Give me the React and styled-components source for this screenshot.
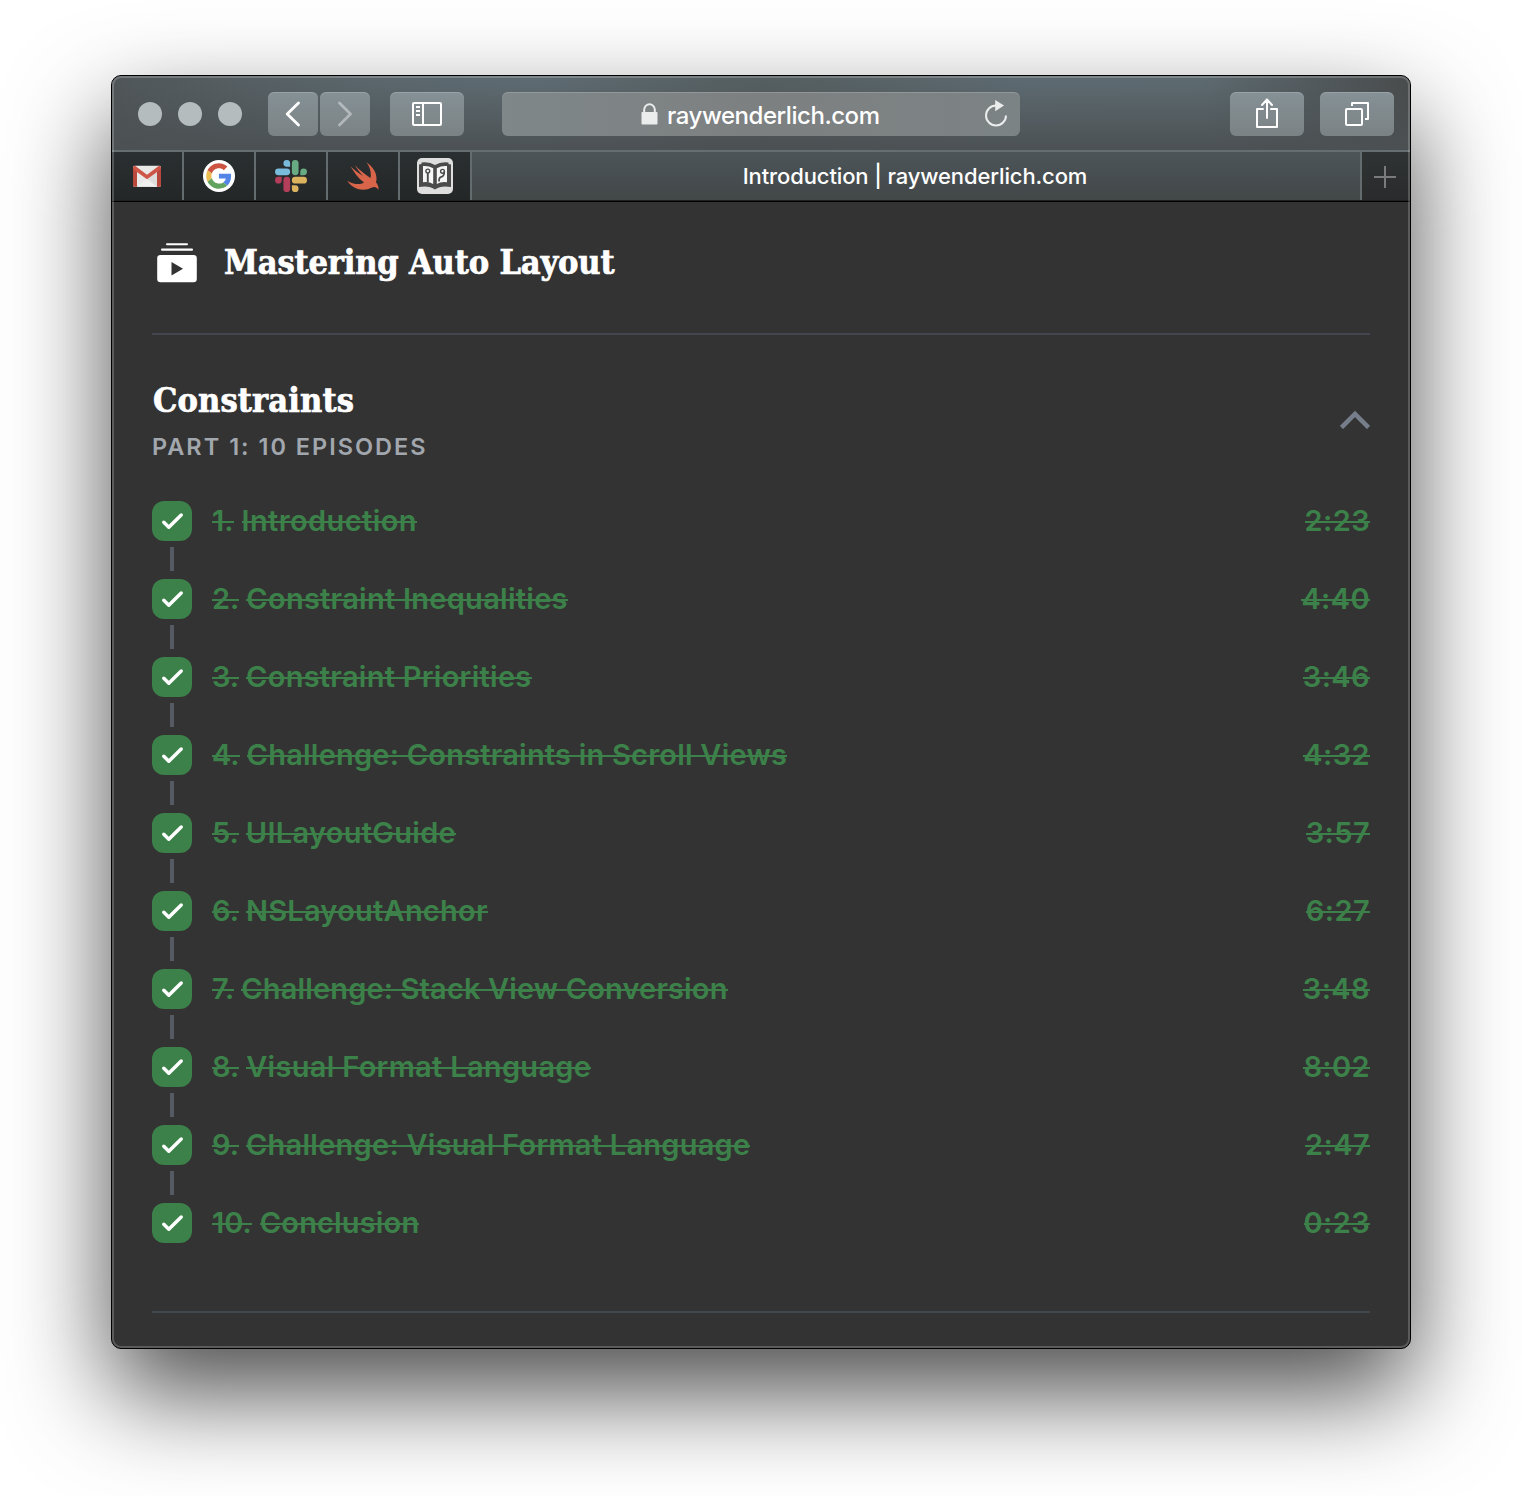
import React from "react";
import styled, { createGlobalStyle } from "styled-components";

const GlobalStyle = createGlobalStyle`
  *, *::before, *::after { box-sizing: border-box; }
  body { margin: 0; background: #fff; }
  svg { display: block; flex: none; }
`;

const sans = `Inter, Roboto, "Liberation Sans", sans-serif`;

const Page = styled.div`
  width: 1522px;
  height: 1496px;
  padding: 75px 111px 147px;
  overflow: hidden;
  font-family: ${sans};
`;

const Window = styled.main`
  position: relative;
  display: flex;
  flex-direction: column;
  height: 100%;
  border: 1px solid #000;
  border-radius: 10px;
  background: #333;
  box-shadow: 0 44px 100px rgba(0, 0, 0, 0.7);

  &::after {
    content: "";
    position: absolute;
    inset: 0;
    border: 2px solid rgba(255, 255, 255, 0.2);
    border-radius: 9px;
    pointer-events: none;
  }
`;

const Toolbar = styled.header`
  display: flex;
  align-items: flex-start;
  height: 76px;
  padding: 16px 16px 0 26px;
  border-bottom: 2px solid #666e71;
  border-radius: 9px 9px 0 0;
  background:
    linear-gradient(180deg, rgba(75, 80, 82, 0) 10%, rgba(75, 80, 82, 0.95) 100%),
    linear-gradient(90deg, #505658 0, #5a666c 20%, #5d6a71 33%, #545d5f 50%, #5c6970 70%, #5c696f 84%, #494c4d 100%);
`;

const Lights = styled.div`
  display: flex;
  align-items: center;
  gap: 16px;
  height: 44px;
  margin-right: 26px;
`;

const Light = styled.span`
  width: 24px;
  height: 24px;
  border-radius: 50%;
  background: #b5bcbe;
`;

const ToolButton = styled.button`
  display: flex;
  align-items: center;
  justify-content: center;
  width: ${(p) => p.$width}px;
  height: 44px;
  margin: 0 ${(p) => p.$after || 0}px 0 0;
  padding: 0;
  border: 0;
  border-radius: 6px;
  background: linear-gradient(180deg, #859196, #7b8284);
  box-shadow: inset 0 1px 0 rgba(255, 255, 255, 0.17);
`;

const AddressBar = styled.div`
  display: flex;
  align-items: center;
  width: 518px;
  height: 44px;
  margin-right: auto;
  padding: 0 12px 0 139px;
  border-radius: 6px;
  background: linear-gradient(90deg, #7f8789, #7d8081 50%, #7c8385);
  box-shadow: inset 0 1px 0 rgba(255, 255, 255, 0.17);
  color: #fff;
`;

const Address = styled.span`
  flex: 1;
  margin-left: 9px;
  padding-top: 4px;
  font-size: 24px;
  font-weight: 500;
  line-height: 30px;
  letter-spacing: -0.45px;
  white-space: nowrap;
`;

const TabBar = styled.nav`
  display: flex;
  height: 50px;
  border-bottom: 1px solid #000;
  background: #1e2021;
  padding-bottom: 1px;
`;

const PinnedTab = styled.div`
  display: flex;
  align-items: center;
  justify-content: center;
  width: 72px;
  border-right: 2px solid #656c6f;
  background: linear-gradient(180deg, #2a2f31, #242728);
`;

const ActiveTab = styled.div`
  flex: 1;
  padding-right: 2px;
  border-right: 2px solid #656c6f;
  background: linear-gradient(180deg, #4d5559, #424748);
  color: #fff;
  font-size: 22px;
  font-weight: 500;
  line-height: 48px;
  text-align: center;
  white-space: nowrap;
  letter-spacing: -0.12px;
`;

const NewTab = styled.div`
  display: flex;
  align-items: center;
  width: 48px;
  padding: 2px 0 0 12px;
  background: linear-gradient(180deg, #303334, #292b2c);
`;

const Content = styled.section`
  flex: 1;
  padding: 0 40px;
`;

const CourseHeader = styled.div`
  display: flex;
  height: 133px;
  padding: 41px 0 0 5px;
  border-bottom: 2px solid #42474f;
`;

const Heading = styled.h2`
  margin: ${(p) => p.$margin || "0"};
  color: #fff;
  font-family: "DejaVu Serif Condensed", "DejaVu Serif", serif;
  font-stretch: condensed;
  font-size: 34px;
  font-weight: 700;
  line-height: 38px;
  letter-spacing: ${(p) => p.$spacing}px;
  white-space: nowrap;
  -webkit-text-stroke: 0.7px #fff;
`;

const Part = styled.div`
  height: 978px;
  border-bottom: 2px solid #42474f;
`;

const PartHeader = styled.div`
  display: flex;
  justify-content: space-between;
  height: 166px;
  padding-top: 46px;
`;

const Episodes = styled.p`
  margin: 13px 0 0 0;
  color: #a2a7ae;
  font-size: 23.5px;
  font-weight: 600;
  line-height: 30px;
  letter-spacing: 2px;
`;

const Collapse = styled.div`
  padding-top: 28px;
`;

const List = styled.ol`
  margin: 0;
  padding: 0;
  list-style: none;
`;

const Row = styled.li`
  display: flex;
  height: 78px;
  color: #3c8149;
  font-size: 29px;
  font-weight: 600;
  line-height: 40px;
  white-space: nowrap;
`;

const Track = styled.div`
  display: flex;
  flex-direction: column;
  align-items: center;
  gap: 6px;
  width: 40px;
  margin-right: 20px;
`;

const Badge = styled.span`
  width: 40px;
  height: 40px;
  border-radius: 12px;
  background: #3c8149;
`;

const Connector = styled.span`
  width: 4px;
  height: 24px;
  background: #565b63;
`;

const Struck = styled.span`
  height: 40px;
  margin-left: ${(p) => p.$before || 0}px;
  letter-spacing: ${(p) => p.$spacing || 0}px;
  background: linear-gradient(#3c8149, #3c8149) 0 20px / 100% 2px no-repeat;
`;

const Duration = styled(Struck)`
  margin-left: auto;
`;

const episodes = [
  { title: "Introduction", time: "2:23", spacing: 0.4, gap: 8 },
  { title: "Constraint Inequalities", time: "4:40", spacing: 0.27 },
  { title: "Constraint Priorities", time: "3:46", spacing: 0.27 },
  { title: "Challenge: Constraints in Scroll Views", time: "4:32", spacing: 0.22 },
  { title: "UILayoutGuide", time: "3:57", spacing: 0.29 },
  { title: "NSLayoutAnchor", time: "6:27", spacing: 0.25 },
  { title: "Challenge: Stack View Conversion", time: "3:48", spacing: 0.14 },
  { title: "Visual Format Language", time: "8:02", spacing: 0.3 },
  { title: "Challenge: Visual Format Language", time: "2:47", spacing: 0.25 },
  { title: "Conclusion", time: "0:23", spacing: 0.15, gap: 8 },
];

const Chevron = ({ forward }) => (
  <svg width="20" height="28" viewBox="0 0 20 28" fill="none" stroke="#fff" strokeWidth="2.8"
    strokeLinecap="round" strokeLinejoin="round" opacity={forward ? 0.4 : 1}>
    <path d={forward ? "M4.500 3 15.500 14 4.500 25" : "M15.500 3 4.200 14 15.500 25"} />
  </svg>
);

const SidebarIcon = () => (
  <svg width="30" height="24" viewBox="0 0 30 24" fill="none" stroke="#fff" strokeWidth="2">
    <rect x="1" y="1" width="28" height="22" rx="1" />
    <path d="M11 1v22M4 5h4M4 9h4M4 13h4" />
  </svg>
);

const LockIcon = () => (
  <svg width="17" height="22" viewBox="0 0 17 22">
    <path d="M3.2 10V6.6a5.3 5.3 0 0 1 10.6 0V10" fill="none" stroke="#ebecec" strokeWidth="2" />
    <rect x="0.5" y="9" width="16" height="12.5" rx="0.8" fill="#ebecec" />
  </svg>
);

const ReloadIcon = () => (
  <svg width="24" height="28" viewBox="0 0 24 28">
    <path d="M22 15.500a10 10 0 1 1-10-10" fill="none" stroke="#ebecec" strokeWidth="2" />
    <path d="M11.200 0 20 5.500l-8.800 5.800z" fill="#ebecec" />
  </svg>
);

const ShareIcon = () => (
  <svg width="24" height="32" viewBox="0 0 24 32" fill="none" stroke="#fff" strokeWidth="2"
    strokeLinecap="round" strokeLinejoin="round">
    <path d="M8 11H2v18h20V11h-6M12 20V1.500M7 7l5-5.500L17 7" />
  </svg>
);

const TabsIcon = () => (
  <svg width="24" height="24" viewBox="0 0 24 24" fill="none" stroke="#fff" strokeWidth="2"
    strokeLinejoin="round">
    <rect x="1" y="7" width="16" height="16" rx="1" />
    <path d="M7 4V1h16v16h-3" />
  </svg>
);

const GmailIcon = () => (
  <svg width="28" height="22" viewBox="0 0 28 22">
    <g transform="translate(0 .8)">
      <rect width="28" height="21" rx="1.5" fill="#e9e9e7" />
      <path d="M14 13.500 24 5v16H20z" fill="#dddddb" />
      <path d="M4 21 14 13l10 8z" fill="#f1f1ef" />
      <path d="M0 1.500V19.500Q0 21 1.500 21H4V5.500zM28 1.500V19.500Q28 21 26.500 21H24V5.500z" fill="#b8483c" />
      <path d="M0 2Q0 0 2 0L14 9 26 0q2 0 2 2 0 1.500-1.500 2.500L14 13.500 1.500 4.500Q0 3.500 0 2z" fill="#cf5546" />
    </g>
  </svg>
);

const GoogleIcon = () => (
  <svg width="32" height="32" viewBox="0 0 32 32">
    <circle cx="16" cy="16" r="16" fill="#fff" />
    <g transform="translate(3.200 3.200) scale(.53)">
      <path fill="#cd5443" d="M24 9.500c3.540 0 6.710 1.220 9.210 3.600l6.850-6.850C35.900 2.380 30.470 0 24 0 14.620 0 6.510 5.380 2.560 13.220l7.980 6.190C12.430 13.720 17.740 9.500 24 9.500z" />
      <path fill="#5384e6" d="M46.980 24.550c0-1.570-.15-3.090-.38-4.550H24v9.020h12.940c-.58 2.960-2.260 5.480-4.780 7.180l7.730 6c4.510-4.180 7.090-10.360 7.090-17.650z" />
      <path fill="#edbd50" d="M10.530 28.590A14.500 14.500 0 0 1 9.770 24c0-1.600.27-3.140.76-4.590l-7.980-6.190A23.900 23.900 0 0 0 0 24c0 3.880.92 7.540 2.560 10.780z" />
      <path fill="#62a35f" d="M24 48c6.480 0 11.930-2.130 15.890-5.810l-7.730-6c-2.150 1.450-4.920 2.300-8.160 2.300-6.260 0-11.570-4.220-13.470-9.910l-7.980 6.190C6.510 42.620 14.620 48 24 48z" />
    </g>
  </svg>
);

const SlackIcon = () => (
  <svg width="32" height="32" viewBox="0 0 24 24">
    <path fill="#b23e5a" d="M5.042 15.165a2.528 2.528 0 0 1-2.520 2.523A2.528 2.528 0 0 1 0 15.165a2.527 2.527 0 0 1 2.522-2.520h2.520zM6.313 15.165a2.527 2.527 0 0 1 2.521-2.520 2.527 2.527 0 0 1 2.521 2.520v6.313A2.528 2.528 0 0 1 8.834 24a2.528 2.528 0 0 1-2.521-2.522z" />
    <path fill="#79bbdb" d="M8.834 5.042a2.528 2.528 0 0 1-2.521-2.520A2.528 2.528 0 0 1 8.834 0a2.528 2.528 0 0 1 2.521 2.522v2.520zM8.834 6.313a2.528 2.528 0 0 1 2.521 2.521 2.528 2.528 0 0 1-2.521 2.521H2.522A2.528 2.528 0 0 1 0 8.834a2.528 2.528 0 0 1 2.522-2.521z" />
    <path fill="#68ab83" d="M18.956 8.834a2.528 2.528 0 0 1 2.522-2.521A2.528 2.528 0 0 1 24 8.834a2.528 2.528 0 0 1-2.522 2.521h-2.522zM17.688 8.834a2.528 2.528 0 0 1-2.523 2.521 2.527 2.527 0 0 1-2.520-2.521V2.522A2.527 2.527 0 0 1 15.165 0a2.528 2.528 0 0 1 2.523 2.522z" />
    <path fill="#dbb25e" d="M15.165 18.956a2.528 2.528 0 0 1 2.523 2.522A2.528 2.528 0 0 1 15.165 24a2.527 2.527 0 0 1-2.520-2.522v-2.522zM15.165 17.688a2.527 2.527 0 0 1-2.520-2.523 2.526 2.526 0 0 1 2.520-2.520h6.313A2.527 2.527 0 0 1 24 15.165a2.528 2.528 0 0 1-2.522 2.523z" />
  </svg>
);

const SwiftIcon = () => (
  <svg width="32" height="28" viewBox="0 0 32 28">
    <path fill="#d8644a" d="M19.500.3C27 5.500 31 13 29 20.300c2.500 3.200 2.800 5.700 2.300 7.400-1.800-3.200-4.300-3.200-6.800-2C17 29.500 6 28 .3 18.700 6 22.500 13 23 17 20.500 11 16 7 10 3.300 4.200 8 8.500 12 11.500 16 14 13 11 10 6.500 7.700 3 13 8.500 19 13 23.500 16 24.500 11 23 5 19.500.3z" />
  </svg>
);

const BookIcon = () => (
  <svg width="36" height="36" viewBox="0 0 36 36">
    <rect width="36" height="36" rx="5" fill="#dedede" />
    <path fill="#4b4b4b" d="M2 6.500 4.500 6V4.500Q12.500 3.500 18 7q5.500-3.500 13.500-2.500V6l2.500.5V29q-10-2-16 2.500Q12 27 2 29z" />
    <path fill="#f6f6f6" d="M6 8q5.500-.5 10.200 2.300v15.700q-4.200-2.600-10.200-1.800zM30 8q-5.500-.5-10.200 2.300v15.700q4.200-2.600 10.200-1.800z" />
    <g fill="none" stroke="#4b4b4b" strokeWidth="1.400">
      <circle cx="10.800" cy="13" r="1.900" />
      <path d="M10.800 15v9.500" strokeWidth="1.900" />
      <circle cx="25.500" cy="13.300" r="1.900" />
      <path d="M27.300 13.800q0 4.700-3.600 5.400-1.700.4-1.700 4.300" strokeWidth="1.700" />
    </g>
  </svg>
);

const PlusIcon = () => (
  <svg width="22" height="22" viewBox="0 0 22 22" stroke="#797b7c" strokeWidth="2">
    <path d="M11 0v22M0 11h22" />
  </svg>
);

const CourseIcon = () => (
  <svg width="40" height="40" viewBox="0 0 40 40" fill="#fff">
    <rect x="9" y="0.300" width="22" height="2" rx="1" />
    <rect x="4" y="5.500" width="32" height="2.200" rx="1" />
    <path fillRule="evenodd" d="M3.500 12h33a3.300 3.300 0 0 1 3.300 3.300v20.700a3.300 3.300 0 0 1-3.300 3.300h-33a3.300 3.300 0 0 1-3.300-3.300V15.300A3.300 3.300 0 0 1 3.500 12zM14.500 19v13.500l11.500-6.700z" />
  </svg>
);

const CollapseIcon = () => (
  <svg width="30" height="20" viewBox="0 0 30 20" fill="none" stroke="#767d8b" strokeWidth="4.500">
    <path d="M1.500 18.500 15 5 28.500 18.500" />
  </svg>
);

const CheckIcon = () => (
  <svg width="40" height="40" viewBox="0 0 40 40" fill="none" stroke="#fff" strokeWidth="3.500"
    strokeLinecap="round" strokeLinejoin="round">
    <path d="M11.800 21.300 16.800 26.200 29.200 14" />
  </svg>
);

export default function App() {
  return (
    <Page>
      <GlobalStyle />
      <Window>
        <Toolbar>
          <Lights><Light /><Light /><Light /></Lights>
          <ToolButton $width={50} $after={2} aria-label="Back"><Chevron /></ToolButton>
          <ToolButton $width={50} $after={20} aria-label="Forward"><Chevron forward /></ToolButton>
          <ToolButton $width={74} $after={38} aria-label="Sidebar"><SidebarIcon /></ToolButton>
          <AddressBar>
            <LockIcon />
            <Address>raywenderlich.com</Address>
            <ReloadIcon />
          </AddressBar>
          <ToolButton $width={74} $after={16} aria-label="Share"><ShareIcon /></ToolButton>
          <ToolButton $width={74} aria-label="Tabs"><TabsIcon /></ToolButton>
        </Toolbar>
        <TabBar>
          <PinnedTab><GmailIcon /></PinnedTab>
          <PinnedTab><GoogleIcon /></PinnedTab>
          <PinnedTab><SlackIcon /></PinnedTab>
          <PinnedTab><SwiftIcon /></PinnedTab>
          <PinnedTab><BookIcon /></PinnedTab>
          <ActiveTab>Introduction | raywenderlich.com</ActiveTab>
          <NewTab><PlusIcon /></NewTab>
        </TabBar>
        <Content>
          <CourseHeader>
            <CourseIcon />
            <Heading $margin="0 0 0 27px" $spacing={-0.15}>Mastering Auto Layout</Heading>
          </CourseHeader>
          <Part>
            <PartHeader>
              <div>
                <Heading $margin="0 0 0 1px" $spacing={0.15}>Constraints</Heading>
                <Episodes>PART 1: 10 EPISODES</Episodes>
              </div>
              <Collapse><CollapseIcon /></Collapse>
            </PartHeader>
            <List>
              {episodes.map(({ title, time, spacing, gap = 7 }, i) => (
                <Row key={title}>
                  <Track>
                    <Badge><CheckIcon /></Badge>
                    {i < episodes.length - 1 && <Connector />}
                  </Track>
                  <Struck>{i + 1}.</Struck>
                  <Struck $before={gap} $spacing={spacing}>{title}</Struck>
                  <Duration $spacing={0.4}>{time}</Duration>
                </Row>
              ))}
            </List>
          </Part>
        </Content>
      </Window>
    </Page>
  );
}
